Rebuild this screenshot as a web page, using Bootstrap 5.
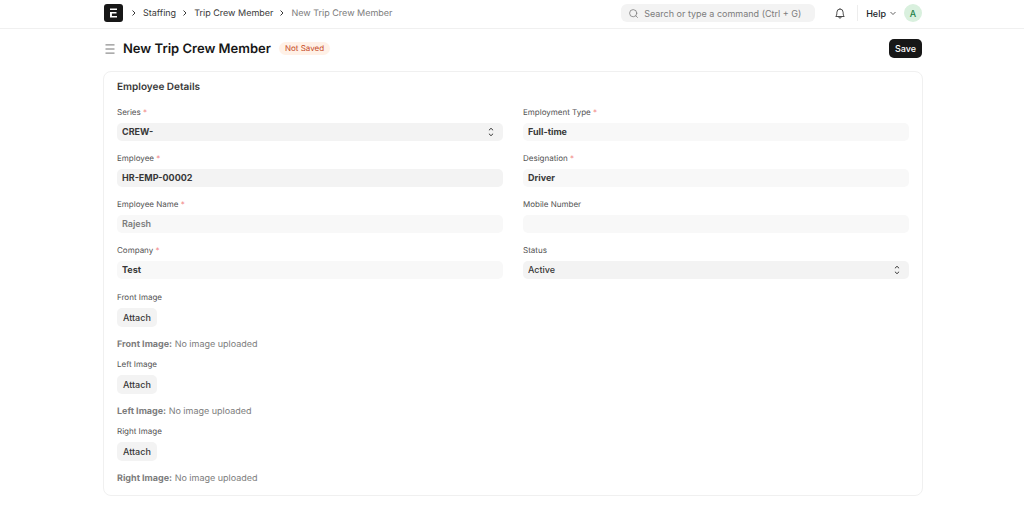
<!DOCTYPE html>
<html lang="en">
<head>
<meta charset="utf-8">
<meta name="viewport" content="width=device-width, initial-scale=1">
<title>New Trip Crew Member</title>
<link rel="stylesheet" href="https://cdn.jsdelivr.net/npm/bootstrap@5.3.0/dist/css/bootstrap.min.css">
<style>
  body { font-family: Inter, "Liberation Sans", sans-serif; font-size: 9px; line-height: 15px; color: #383838; background: #fff; text-rendering: geometricPrecision; }
  .page-width { max-width: 824px; padding: 0 2px 0 4px; }
  .topbar { border-bottom: 1px solid #f0f0f0; padding: 4px 0 6px; }
  .topbar .page-width { height: 18px; }
  .crumbs { gap: 6px; }
  .crumbs a { color: #383838; text-decoration: none; }
  .crumbs .current { color: #7c7c7c; }
  .search { width: 194px; height: 18px; background: #f3f3f3; border-radius: 6px; padding: 0 4px 0 8px; gap: 6px; }
  .search input { background: none; border: 0; padding: 0; min-height: 0; font-size: 9px; line-height: 15px; color: #383838; }
  .search input:focus { background: none; box-shadow: none; }
  .search input::placeholder { color: #7c7c7c; }
  .plain { background: none; border: 0; padding: 0; line-height: 15px; }
  .rule { width: 1px; height: 16px; background: #ededed; }
  .user { width: 18px; height: 18px; background: #d9f0de; color: #1e8048; font-weight: 500; }
  .page-head { height: 42px; padding-bottom: 3px; }
  h1 { font-size: 13px; line-height: 20px; font-weight: 600; color: #171717; }
  .state { font-size: 8px; line-height: 13px; font-weight: 400; padding: 0 6px; background: #fff1e7; color: #c6491f; }
  .btn-save { height: 19px; background: #171717; color: #fff; font-size: 9px; font-weight: 500; line-height: 15px; border: 0; border-radius: 5px; padding: 0 6px; }
  .btn-save:hover { background: #383838; color: #fff; }
  .sheet { border: 1px solid #f0f0f0; border-radius: 8px; padding: 7px 13px 9px; margin: 0 -1px; }
  h2 { font-size: 10px; line-height: 16px; font-weight: 600; color: #383838; margin-bottom: 10px; }
  .fields { --bs-gutter-x: 20px; }
  .field { margin-bottom: 10px; }
  .field label, .attach label { display: block; font-size: 8px; line-height: 15px; color: #525252; margin-bottom: 3px; }
  .req { color: #f28b8b; }
  .field .form-control, .field .form-select { height: 18px; min-height: 0; border: 0; border-radius: 5px; padding: 0 5px; font-size: 9px; line-height: 18px; font-weight: 700; color: #383838; background-color: #f3f3f3; }
  .field .form-select { background-position: right 9px center; background-size: 6px 10px;
    background-image: url("data:image/svg+xml,%3Csvg xmlns='http://www.w3.org/2000/svg' viewBox='0 0 6 10' fill='none' stroke='%23383838' stroke-linecap='round' stroke-linejoin='round'%3E%3Cpath d='M1.200 3L3 1.300 4.800 3M1.200 7L3 8.700 4.800 7'/%3E%3C/svg%3E"); }
  .field .form-control[readonly] { background-color: #f8f8f8; }
  .field .form-control.muted { color: #7c7c7c; font-weight: 600; }
  .field .form-select.optional { font-weight: 500; }
  .attachments { padding-top: 1px; }
  .attach { margin-bottom: 5px; }
  .attach:last-child { margin-bottom: 0; }
  .attach .btn { display: block; height: 19px; font-size: 9px; font-weight: 500; line-height: 15px; color: #383838; background: #f3f3f3; border: 0; border-radius: 5px; padding: 0 6px; }
  .attach p { margin: 10px 0 0; color: #7c7c7c; }
  .attach b { font-weight: 700; }
</style>
</head>
<body>
<header class="topbar">
  <div class="page-width container-fluid d-flex align-items-center">
    <a href="#" class="d-flex" aria-label="Home">
      <svg width="19" height="18" viewBox="0 0 19 18"><rect width="19" height="18" rx="3" fill="#171717"/><path d="M6 4.500h7v1.600H6zM6 8h6.500v1.600H7.900v2.300H13v1.600H6z" fill="#fff"/></svg>
    </a>
    <nav aria-label="Breadcrumb" class="ms-2">
      <ol class="crumbs list-unstyled d-flex align-items-center mb-0">
        <li class="d-flex"><svg width="6" height="8" viewBox="0 0 6 8" fill="none" stroke="#383838"><path d="M1.500 1.500L4 4 1.500 6.500"/></svg></li>
        <li><a href="#">Staffing</a></li>
        <li class="d-flex"><svg width="6" height="8" viewBox="0 0 6 8" fill="none" stroke="#383838"><path d="M1.500 1.500L4 4 1.500 6.500"/></svg></li>
        <li><a href="#">Trip Crew Member</a></li>
        <li class="d-flex"><svg width="6" height="8" viewBox="0 0 6 8" fill="none" stroke="#383838"><path d="M1.500 1.500L4 4 1.500 6.500"/></svg></li>
        <li><a href="#" class="current" aria-current="page">New Trip Crew Member</a></li>
      </ol>
    </nav>
    <div class="search d-flex align-items-center ms-auto">
      <svg class="flex-shrink-0" width="9" height="9" viewBox="0 0 9 9" fill="none" stroke="#7c7c7c" stroke-width=".8" stroke-linecap="round"><circle cx="4.200" cy="4.200" r="3.600"/><path d="M6.800 6.800l1.700 1.700"/></svg>
      <input type="search" class="form-control" aria-label="Search" placeholder="Search or type a command (Ctrl + G)">
    </div>
    <button type="button" class="plain d-flex ms-3 px-1" aria-label="Notifications">
      <svg width="10" height="11" viewBox="0 0 10 11" fill="none" stroke="#383838" stroke-width=".9" stroke-linejoin="round"><path d="M.8 8.500C1.500 7.600 1.900 6.900 1.900 4.200a3.100 3.100 0 0 1 6.200 0c0 2.700.4 3.400 1.100 4.300zM3.700 8.800a1.300 1.300 0 0 0 2.600 0M5 .3v.8"/></svg>
    </button>
    <div class="rule ms-2"></div>
    <button type="button" class="plain d-flex align-items-center gap-1 ms-2 fw-medium text-dark">Help
      <svg width="6" height="5" viewBox="0 0 6 5" fill="none" stroke="#525252" stroke-width=".9"><path d="M.5 1L3 3.500 5.500 1"/></svg>
    </button>
    <button type="button" class="plain user rounded-circle ms-2" aria-label="Account">A</button>
  </div>
</header>

<main class="page-width container-fluid">
  <div class="page-head d-flex align-items-center">
    <button type="button" class="plain d-flex me-2" aria-label="Toggle sidebar">
      <svg width="11" height="10" viewBox="0 0 11 10" stroke="#525252" stroke-width=".8"><path d="M1.500 .900h9M1.500 5h9M1.500 9.100h9"/></svg>
    </button>
    <h1 class="mb-0">New Trip Crew Member</h1>
    <span class="state badge rounded-pill ms-2">Not Saved</span>
    <button type="submit" form="crew" class="btn btn-save ms-auto">Save</button>
  </div>

  <form class="sheet" id="crew">
    <h2>Employee Details</h2>
    <div class="row fields">
      <div class="col-6">
        <div class="field">
          <label for="series">Series <span class="req">*</span></label>
          <select class="form-select" id="series"><option>CREW-</option></select>
        </div>
        <div class="field">
          <label for="employee">Employee <span class="req">*</span></label>
          <input class="form-control" id="employee" value="HR-EMP-00002">
        </div>
        <div class="field">
          <label for="name">Employee Name <span class="req">*</span></label>
          <input class="form-control muted" id="name" value="Rajesh" readonly>
        </div>
        <div class="field">
          <label for="company">Company <span class="req">*</span></label>
          <input class="form-control" id="company" value="Test" readonly>
        </div>
        <div class="attachments">
          <div class="attach">
            <label for="front">Front Image</label>
            <button type="button" class="btn" id="front">Attach</button>
            <p><b>Front Image:</b> No image uploaded</p>
          </div>
          <div class="attach">
            <label for="left">Left Image</label>
            <button type="button" class="btn" id="left">Attach</button>
            <p><b>Left Image:</b> No image uploaded</p>
          </div>
          <div class="attach">
            <label for="right">Right Image</label>
            <button type="button" class="btn" id="right">Attach</button>
            <p><b>Right Image:</b> No image uploaded</p>
          </div>
        </div>
      </div>
      <div class="col-6">
        <div class="field">
          <label for="type">Employment Type <span class="req">*</span></label>
          <input class="form-control" id="type" value="Full-time" readonly>
        </div>
        <div class="field">
          <label for="designation">Designation <span class="req">*</span></label>
          <input class="form-control" id="designation" value="Driver" readonly>
        </div>
        <div class="field">
          <label for="mobile">Mobile Number</label>
          <input class="form-control" id="mobile" type="tel" readonly>
        </div>
        <div class="field">
          <label for="status">Status</label>
          <select class="form-select optional" id="status"><option>Active</option></select>
        </div>
      </div>
    </div>
  </form>
</main>
<script src="https://cdn.jsdelivr.net/npm/bootstrap@5.3.0/dist/js/bootstrap.bundle.min.js"></script>
</body>
</html>
